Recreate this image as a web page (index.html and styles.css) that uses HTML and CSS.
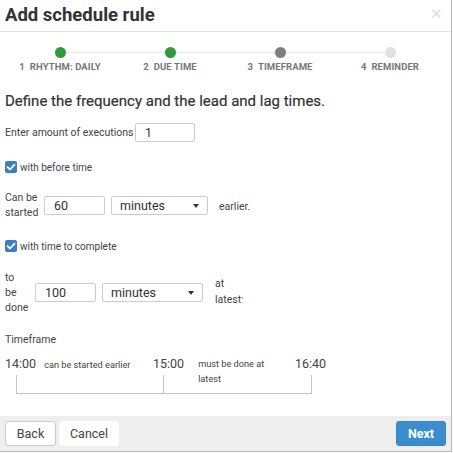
FILE: index.html
```html
<!DOCTYPE html>
<html>
<head>
<meta charset="utf-8">
<link rel="stylesheet" href="styles.css">
</head>
<body>
<div class="dialog">
  <div class="header">
    <h1 class="title">Add schedule rule</h1>
    <span class="close">&#x2715;</span>
  </div>
  <div class="stepper">
    <div class="track"></div>
    <div class="step"><span class="dot dot-done"></span><span class="slabel">1&nbsp;&nbsp;RHYTHM: DAILY</span></div>
    <div class="step"><span class="dot dot-done"></span><span class="slabel">2&nbsp;&nbsp;DUE TIME</span></div>
    <div class="step"><span class="dot dot-current"></span><span class="slabel">3&nbsp;&nbsp;TIMEFRAME</span></div>
    <div class="step"><span class="dot dot-todo"></span><span class="slabel">4&nbsp;&nbsp;REMINDER</span></div>
  </div>
  <div class="body">
    <h2 class="heading">Define the frequency and the lead and lag times.</h2>
    <div class="row row-amount">
      <span class="lbl">Enter amount of executions</span>
      <span class="input w60">1</span>
    </div>
    <div class="check check-first">
      <span class="box"><svg viewBox="0 0 12 12" width="12" height="12"><path d="M2.6 6.2 L5 8.5 L9.5 3.6" fill="none" stroke="#fff" stroke-width="1.8" stroke-linecap="round" stroke-linejoin="round"/></svg></span>
      <span class="clbl">with before time</span>
    </div>
    <div class="row row-before">
      <span class="side w39">Can be<br>started</span>
      <span class="input w61">60</span>
      <span class="select w98">minutes<span class="caret"></span></span>
      <span class="after">earlier.</span>
    </div>
    <div class="check check-second">
      <span class="box"><svg viewBox="0 0 12 12" width="12" height="12"><path d="M2.6 6.2 L5 8.5 L9.5 3.6" fill="none" stroke="#fff" stroke-width="1.8" stroke-linecap="round" stroke-linejoin="round"/></svg></span>
      <span class="clbl">with time to complete</span>
    </div>
    <div class="row row-done">
      <span class="side w30">to<br>be<br>done</span>
      <span class="input w61">100</span>
      <span class="select w101">minutes<span class="caret"></span></span>
      <span class="after">at<br>latest<sup>&#x2019;</sup></span>
    </div>
    <div class="tf-title">Timeframe</div>
    <div class="timeline">
      <div class="seg seg1">
        <span class="time">14:00</span>
        <span class="tdesc">can be started earlier</span>
      </div>
      <div class="seg seg2">
        <span class="time">15:00</span>
        <span class="tdesc">must be done at<br>latest</span>
      </div>
      <div class="seg seg3">
        <span class="time">16:40</span>
      </div>
    </div>
    <div class="bracket">
      <div class="bpart"></div>
      <div class="bpart"></div>
    </div>
  </div>
  <div class="footer">
    <button class="btn back">Back</button>
    <button class="btn cancel">Cancel</button>
    <span class="spacer"></span>
    <button class="btn next">Next</button>
  </div>
</div>
</body>
</html>
```

FILE: styles.css
```css
* { box-sizing: border-box; }
html, body { margin: 0; padding: 0; background: #fff; }
body { font-family: Roboto, "Noto Sans", Arial, sans-serif; color: #333; }

.dialog {
  width: 452px;
  height: 452px;
  border-right: 1px solid #b9b9b9;
  border-bottom: 1px solid #b9b9b9;
  display: flex;
  flex-direction: column;
  background: #fff;
}

.header {
  height: 32px;
  border-bottom: 1px solid #e2e2e2;
  display: flex;
  align-items: center;
  justify-content: space-between;
  padding: 0 8px 0 5px;
}
.title {
  margin: 0;
  font-size: 18.5px;
  font-weight: 700;
  color: #333;
  line-height: 24px;
  padding-bottom: 2px;
}
.close { color: #ddd; font-size: 15px; line-height: 1; margin-top: -2px; }

.stepper {
  position: relative;
  display: flex;
  padding: 15px 5px 0 5px;
  height: 46px;
}
.track {
  position: absolute;
  left: 60px;
  right: 62px;
  top: 20px;
  height: 1px;
  background: #e6e6e6;
}
.step {
  position: relative;
  width: 110px;
  display: flex;
  flex-direction: column;
  align-items: center;
}
.dot {
  width: 11px;
  height: 11px;
  border-radius: 50%;
  display: block;
}
.dot-done { background: #2e9a39; }
.dot-current { background: #7f7f7f; }
.dot-todo { background: #e1e1e1; }
.slabel {
  margin-top: 3px;
  font-size: 9.5px;
  font-weight: 700;
  color: #777;
  white-space: nowrap;
  letter-spacing: 0.1px;
}

.body { flex: 1; padding: 0 5px; }
.heading {
  margin: 13px 0 0 0;
  font-size: 15px;
  font-weight: 400;
  color: #333;
  line-height: 20px;
  -webkit-text-stroke: 0.2px #333;
}

.row { display: flex; align-items: center; }
.lbl, .side, .after, .clbl { font-size: 10.5px; color: #444; }
.row-amount { margin-top: 12px; height: 18px; }
.row-amount .lbl { width: 130px; }

.input, .select {
  height: 19px;
  border: 1px solid #ccc;
  border-radius: 2px;
  font-size: 12.5px;
  color: #333;
  padding: 0 0 0 9px;
  display: flex;
  align-items: center;
  background: #fff;
}
.w60 { width: 60px; }
.w61 { width: 61px; }
.w98 { width: 97px; }
.w101 { width: 101px; }
.select { position: relative; padding-left: 8px; margin-left: 6px; }
.caret {
  position: absolute;
  right: 8px;
  top: 7px;
  width: 0; height: 0;
  border-left: 3.5px solid transparent;
  border-right: 3.5px solid transparent;
  border-top: 4px solid #333;
}

.check { display: flex; align-items: center; }
.check-first { margin-top: 20px; }
.check-second { margin-top: 20px; }
.box {
  width: 12px; height: 12px;
  background: #3a7fc1;
  border-radius: 2px;
  display: flex;
  margin-right: 3px;
}
.clbl { font-size: 10px; }

.row-before { margin-top: 17px; }
.side { line-height: 15px; }
.w39 { width: 39px; }
.w30 { width: 30px; }
.row-before .after { margin-left: 11px; margin-top: 2px; }

.row-done { margin-top: 18px; }
.row-done .after { margin-left: 12px; line-height: 16px; margin-top: -2px; }
.after sup { font-size: 8px; vertical-align: top; }

.tf-title { margin-top: 18px; font-size: 10.5px; color: #444; }

.timeline { display: flex; margin-top: 11px; height: 28px; }
.seg { display: flex; align-items: flex-start; }
.seg1 { width: 148px; }
.seg2 { width: 142px; }
.time { font-size: 12.5px; color: #444; line-height: 14px; }
.tdesc { font-size: 9.2px; color: #444; line-height: 15px; margin-left: 8px; }
.seg2 .tdesc { margin-left: 14px; margin-top: -1px; }

.bracket {
  display: flex;
  margin-left: 11px;
  width: 296px;
  height: 19px;
  margin-top: -10px;
}
.bpart {
  flex: 0 0 148px;
  border: 1px solid #c4c4c4;
  border-top: none;
}
.bpart + .bpart { flex: 0 0 148px; border-left: none; }

.footer {
  height: 35px;
  background: #eeeeee;
  display: flex;
  align-items: center;
  padding: 0 5px;
}
.btn {
  font-family: Roboto, "Noto Sans", Arial, sans-serif;
  height: 25px;
  font-size: 12.5px;
  border-radius: 3px;
  padding: 0;
  cursor: pointer;
}
.back { width: 51px; background: #fff; border: 1px solid #ccc; color: #444; }
.cancel { width: 60px; background: #fff; border: 1px solid #fff; color: #444; margin-left: 3px; }
.spacer { flex: 1; }
.next { width: 50px; background: #3c8dce; border: 1px solid #3a86c4; color: #fff; font-weight: 700; }
```
